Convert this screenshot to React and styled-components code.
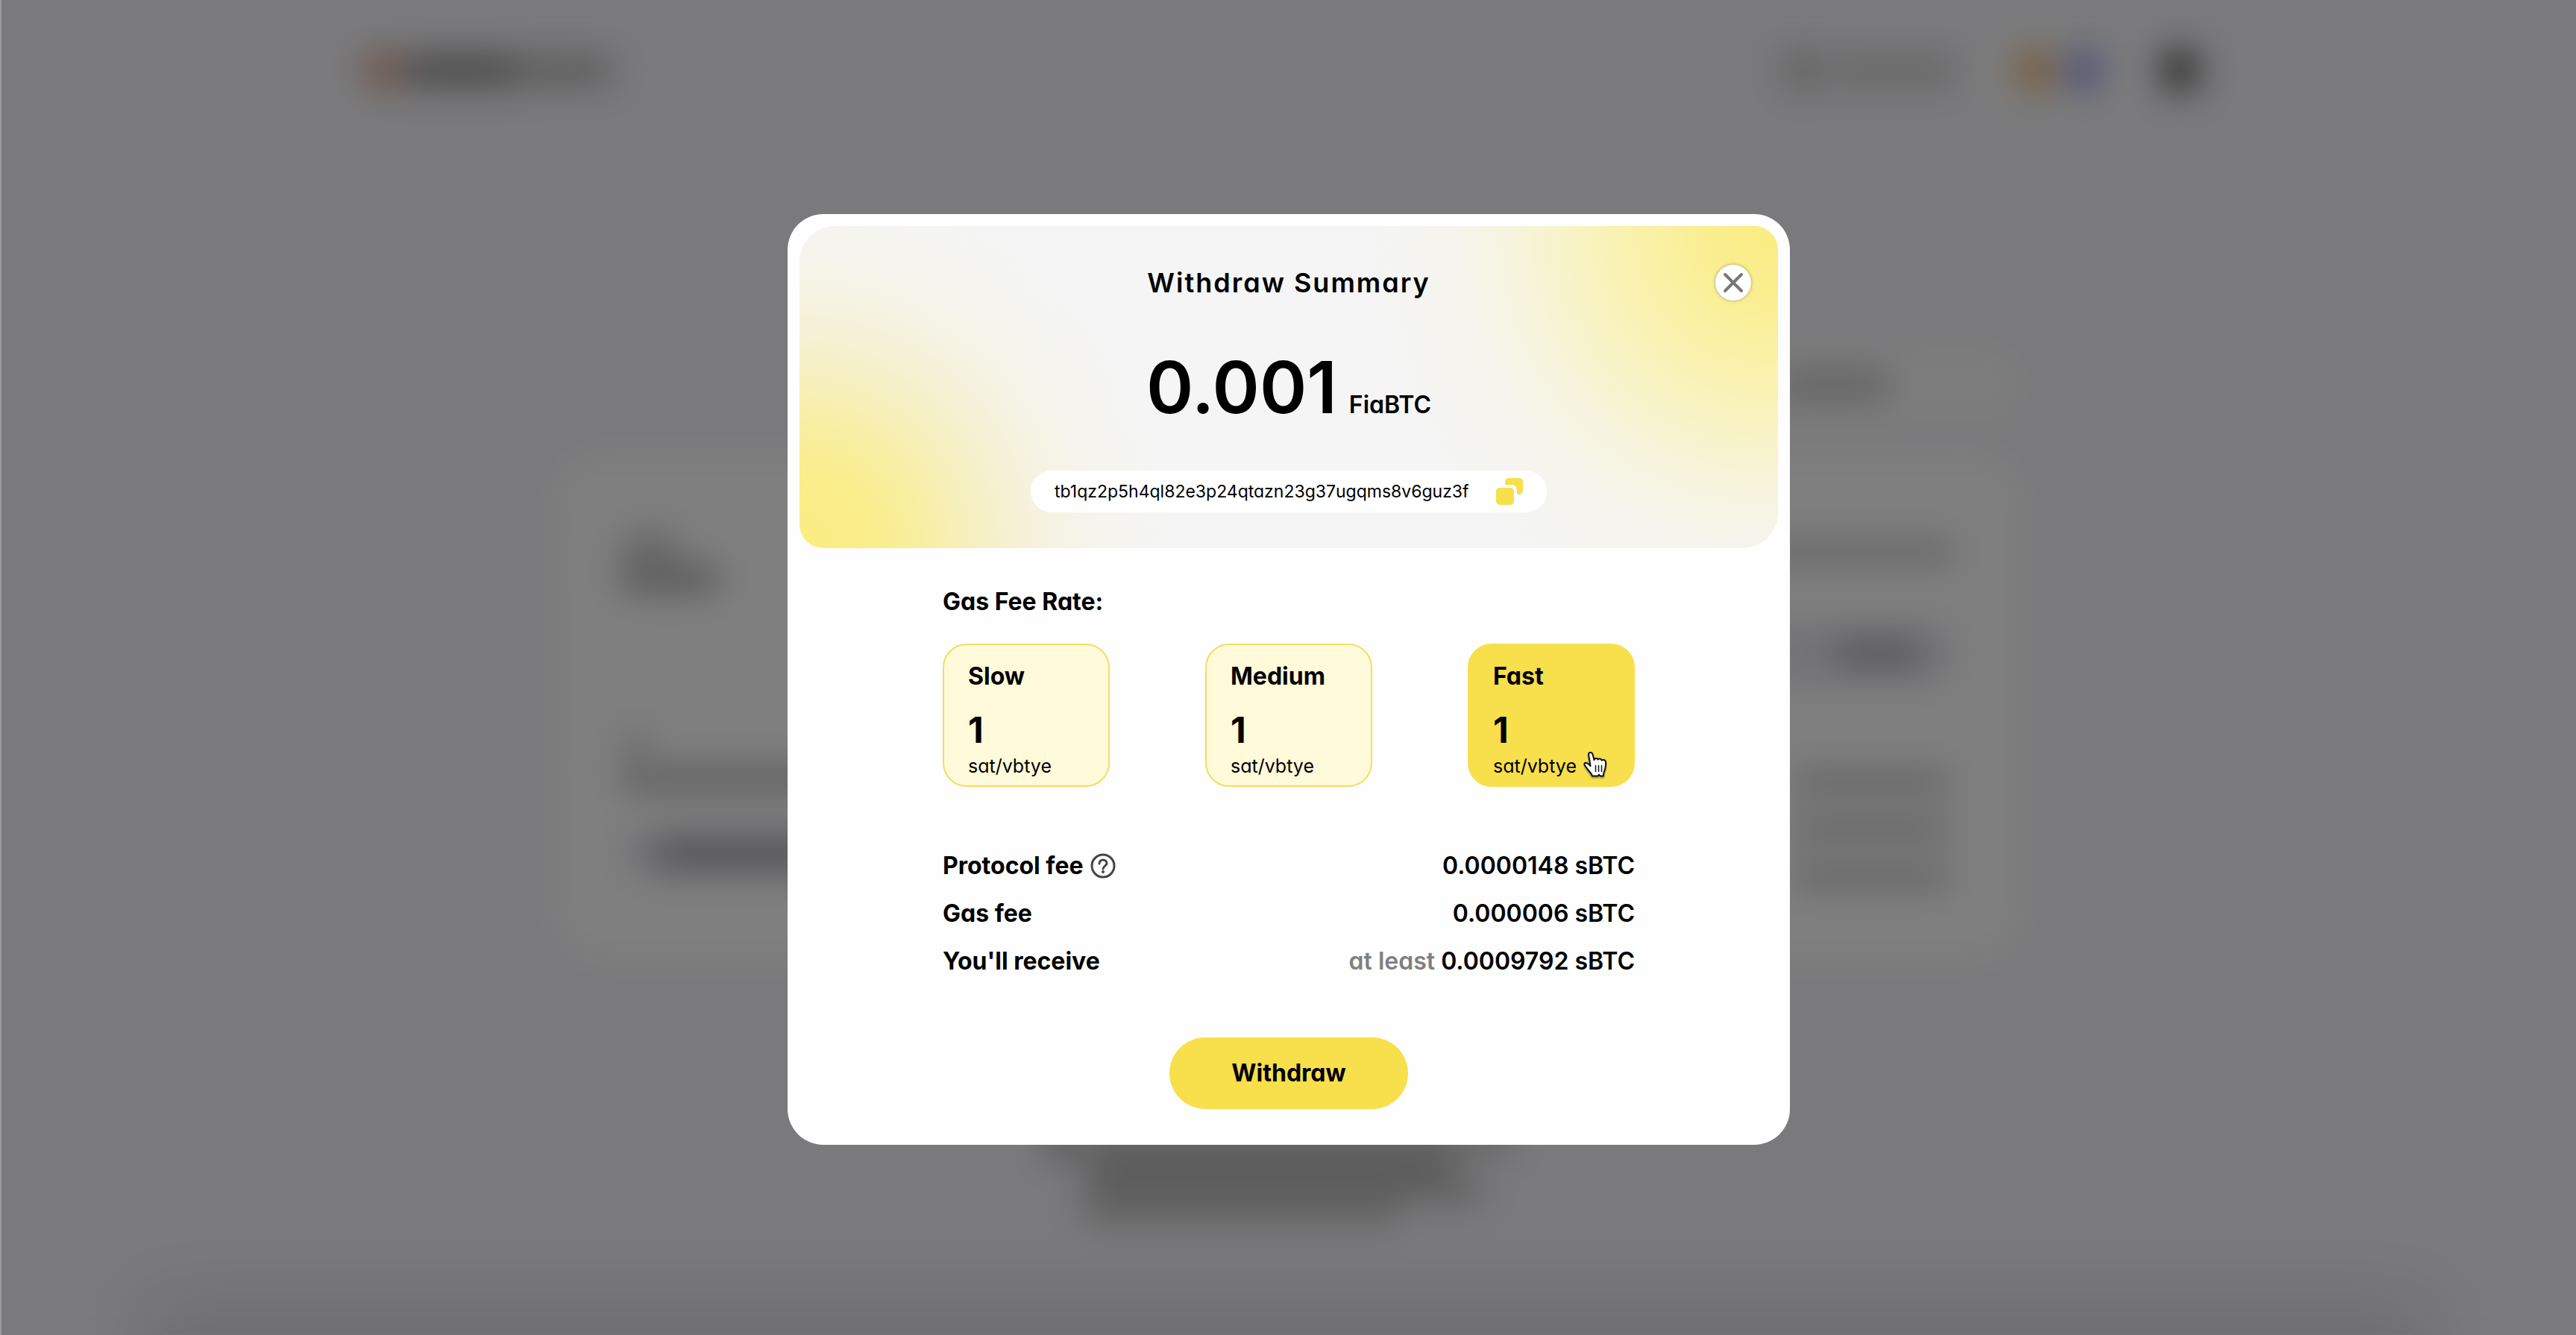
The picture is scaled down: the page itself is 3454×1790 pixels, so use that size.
import React, { useState } from "react";
import styled, { createGlobalStyle } from "styled-components";

const yellow = "#f8df4c";

const GlobalStyle = createGlobalStyle`
  *, *::before, *::after { box-sizing: border-box; }
  html, body { margin: 0; background: #f4f4f8; }
  body, button {
    font-family: Inter, "Open Sans", sans-serif;
    font-feature-settings: "cv11" 1;
    color: #000;
  }
  h1, p, dl, dt, dd, fieldset, legend { margin: 0; padding: 0; border: 0; }
  button { border: 0; padding: 0; cursor: pointer; }
`;

const Page = styled.div`
  min-height: 100vh;
  overflow: hidden;
  display: flex;
  flex-direction: column;
`;

const Bar = styled.span`
  display: block;
  width: ${(p) => p.$w}px;
  height: ${(p) => p.$h || 24}px;
  border-radius: ${(p) => p.$r || 0}px;
  background: ${(p) => p.$c || "#b8b8b8"};
`;

const TopBar = styled.header`
  width: 100%;
  max-width: 2480px;
  height: 188px;
  margin: 0 auto;
  padding: 0 20px 0 0;
  display: flex;
  align-items: center;
  justify-content: space-between;
`;

const Group = styled.div`
  display: flex;
  align-items: center;
  gap: ${(p) => p.$gap || 0}px;
`;

const TokenPill = styled.div`
  display: flex;
  gap: 16px;
  padding: 16px 40px;
  margin: 0 24px 0 28px;
  border-radius: 40px;
  background: #fbfbfb;
`;

const Tabs = styled.div`
  width: 100%;
  max-width: 1964px;
  height: 96px;
  margin: 280px auto 46px;
  display: flex;
  align-items: center;
  justify-content: flex-end;
  padding-right: 176px;
  border-radius: 48px;
  background: linear-gradient(90deg, #f4f4f8 50%, #fbfbfb 50%);
`;

const Panel = styled.section`
  width: 100%;
  max-width: 1964px;
  height: 676px;
  margin: 0 auto;
  padding: 108px 88px 0;
  border-radius: 64px;
  background: #fff;
  display: flex;
  justify-content: space-between;
`;

const Column = styled.div`
  flex: 1;
  display: flex;
  flex-direction: column;
  align-items: ${(p) => p.$align || "flex-start"};
  gap: ${(p) => p.$gap}px;
`;

const Stack = styled.div`
  display: flex;
  flex-direction: column;
  gap: ${(p) => p.$gap}px;
  margin: ${(p) => p.$margin || 0};
`;

const Field = styled.div`
  width: 640px;
  height: ${(p) => p.$h}px;
  margin-top: ${(p) => p.$mt || 0}px;
  padding: 0 48px;
  border-radius: 40px;
  background: #e7e7ee;
  display: flex;
  align-items: center;
  justify-content: ${(p) => p.$align || "flex-start"};
`;

const Note = styled.div`
  width: 630px;
  margin: 232px auto 0;
  display: flex;
  gap: 20px;
`;

const Footer = styled.footer`
  flex: none;
  height: 1px;
  width: calc(100% - 440px);
  margin: auto auto 0;
  box-shadow: 0 0 90px 20px rgba(0, 0, 0, 0.24);
`;

const Overlay = styled.div`
  position: fixed;
  inset: 0;
  padding-top: 32px;
  border-left: 2px solid rgba(255, 255, 255, 0.25);
  display: grid;
  place-items: center;
  background: rgba(0, 0, 0, 0.5);
  backdrop-filter: blur(24px);
`;

const Dialog = styled.main`
  width: 1344px;
  max-width: 100%;
  padding: 16px 16px 48px;
  border-radius: 48px;
  background: #fefefe;
  display: flex;
  flex-direction: column;
  align-items: center;
`;

const Hero = styled.header`
  position: relative;
  width: 100%;
  height: 432px;
  padding-top: 52px;
  border-radius: 48px 32px 48px 32px;
  background:
    radial-gradient(circle at 100% 0%, #fbec80 0, #faee92 100px, #faf1a8 180px, #f9f3c0 260px, #f6f4dc 350px, #f5f4ec 430px, #f5f5f500 550px),
    radial-gradient(circle at 0% 100%, #fbed80 0, #faed8c 100px, #f8eea2 165px, #f6f0c2 235px, #f5f2dc 310px, #f5f4ec 390px, #f5f5f500 490px),
    #f5f5f5;
  display: flex;
  flex-direction: column;
  align-items: center;
`;

const Title = styled.h1`
  font-size: 36px;
  line-height: 48px;
  font-weight: 600;
  letter-spacing: 2px;
`;

const CloseButton = styled.button`
  position: absolute;
  top: 52px;
  right: 36px;
  width: 48px;
  height: 48px;
  border-radius: 50%;
  background: #fff;
  box-shadow: 0 0 4px rgba(0, 0, 0, 0.35);
  display: grid;
  place-items: center;
`;

const Amount = styled.p`
  margin-top: 56px;
  display: flex;
  align-items: baseline;
  gap: 16px;
  font-size: 96px;
  line-height: 120px;
  font-weight: 600;
`;

const Unit = styled.span`
  font-size: 32px;
  line-height: 40px;
`;

const Address = styled.div`
  width: 692px;
  height: 56px;
  margin-top: 52px;
  padding: 0 32px;
  border-radius: 28px;
  background: #fff;
  display: flex;
  align-items: center;
  justify-content: space-between;
  font-size: 23px;
  line-height: 32px;
`;

const CopyButton = styled.button`
  width: 36px;
  height: 36px;
  background: none;

  svg { display: block; }
`;

const Body = styled.div`
  width: 100%;
  max-width: 928px;
  padding-top: 52px;
  display: flex;
  flex-direction: column;
  font-size: 32px;
  line-height: 40px;
  font-weight: 700;
`;

const Rates = styled.fieldset`
  display: flex;
  justify-content: space-between;
`;

const Legend = styled.legend`
  margin-bottom: 36px;
`;

const Rate = styled.button`
  position: relative;
  width: 224px;
  height: 192px;
  padding: 22px 32px 0;
  border: 2px solid ${(p) => (p.$active ? yellow : "#f2de60")};
  border-radius: 32px;
  background: ${(p) => (p.$active ? yellow : "#fffad9")};
  display: flex;
  flex-direction: column;
  text-align: left;
  font-size: 32px;
  line-height: 40px;
  font-weight: 700;
`;

const RateValue = styled.span`
  margin-top: 24px;
  font-size: 48px;
  line-height: 56px;
`;

const RateUnit = styled.span`
  font-size: 25px;
  line-height: 40px;
  font-weight: 400;
`;

const Pointer = styled.svg`
  position: absolute;
  left: 152px;
  top: 142px;
  filter: drop-shadow(0 2px 1px rgba(0, 0, 0, 0.35));
`;

const Summary = styled.dl`
  margin-top: 86px;
  display: flex;
  flex-direction: column;
  gap: 24px;
`;

const Row = styled.div`
  display: flex;
  justify-content: space-between;
`;

const Term = styled.dt`
  display: flex;
  align-items: center;
  gap: 8px;
`;

const Value = styled.dd`
  font-weight: 600;
`;

const Muted = styled.span`
  color: #808080;
`;

const Submit = styled.button`
  width: 320px;
  height: 96px;
  margin-top: 82px;
  border-radius: 48px;
  background: ${yellow};
  font-size: 32px;
  line-height: 40px;
  font-weight: 700;
`;

const rates = ["Slow", "Medium", "Fast"];

function HelpIcon() {
  return (
    <svg width="36" height="36" viewBox="0 0 36 36" fill="none" stroke="#444" strokeWidth="3" aria-hidden="true">
      <circle cx="18" cy="18" r="15" />
      <path d="M13 15c0-3 2-5 5-5s5 2 5 4.600c0 3.400-5 3.700-5 7.400" strokeLinecap="round" />
      <circle cx="18" cy="26" r="1" fill="#444" strokeWidth="2" />
    </svg>
  );
}

function HandPointer() {
  return (
    <Pointer width="36" height="38" viewBox="0 0 36 38" aria-hidden="true">
      <path
        d="M8 4.500C8 1.500 12.500 1 13.500 4.200L15.500 12C16 9 20 9 20.500 11.500C21.500 9.500 25 9.800 25.600 12.500C27 11 30.500 11.500 31 14.500C31.500 18 30.800 21 30 24.500C29.500 27 28 29 28 31V33.500H23.500L22 31.500L20.500 33.500H13C12 30 8 26.500 6 23.500C4.500 21 1.500 18.500 2.500 16.800C4 14.500 8 17 10.500 20Z"
        fill="#fff"
        stroke="#111"
        strokeWidth="2"
        strokeLinejoin="round"
      />
      <path d="M17.500 19.500v8M21.500 19.500v8M25.500 19.500v8" stroke="#111" strokeWidth="1.500" strokeLinecap="round" />
    </Pointer>
  );
}

function BlurredPage() {
  return (
    <Page aria-hidden="true">
      <TopBar>
        <Group $gap={4}>
          <Bar $w={52} $h={60} $r={26} $c="#dfae98" />
          <Bar $w={150} $h={40} $c="#8c8c8c" />
          <Bar $w={120} $h={32} $c="#a8a8a8" />
        </Group>
        <Group $gap={16}>
          <Bar $w={50} $h={50} $r={25} $c="#b8b8b8" />
          <Bar $w={160} $h={32} $c="#c4c4c4" />
          <TokenPill>
            <Bar $w={50} $h={54} $r={25} $c="#ecae64" />
            <Bar $w={50} $h={54} $r={25} $c="#8c94e4" />
          </TokenPill>
          <Bar $w={48} $h={56} $r={24} $c="#484848" />
        </Group>
      </TopBar>
      <Tabs>
        <Bar $w={150} $h={32} />
      </Tabs>
      <Panel>
        <Column $gap={194}>
          <Stack $gap={16}>
            <Bar $w={76} $h={26} />
            <Bar $w={130} $h={32} $c="#a4a4a4" />
          </Stack>
          <Stack $gap={24}>
            <Bar $w={36} $h={20} />
            <Bar $w={420} $h={28} $c="#b0b0b0" />
            <Field $h={68} $mt={28}>
              <Bar $w={420} $h={36} $c="#a0a0a6" />
            </Field>
          </Stack>
        </Column>
        <Column $gap={80} $align="flex-end">
          <Stack $margin="8px 0 0">
            <Bar $w={400} $h={28} $c="#c4c4c4" />
          </Stack>
          <Field $h={84} $align="flex-end">
            <Bar $w={110} $h={32} $c="#a8a8ae" />
          </Field>
          <Stack $gap={40} $margin="38px 8px 0 0">
            <Bar $w={210} $h={24} />
            <Bar $w={210} $h={24} />
            <Bar $w={210} $h={24} />
          </Stack>
        </Column>
      </Panel>
      <Note>
        <Bar $w={24} $h={30} $c="#555" />
        <Stack $gap={8}>
          <Bar $w={570} $c="#b4b4b4" />
          <Bar $w={490} $c="#a4a4a4" />
          <Bar $w={530} $c="#a8a8a8" />
          <Bar $w={420} $c="#b8b8b8" />
        </Stack>
      </Note>
      <Footer />
    </Page>
  );
}

export default function App() {
  const [selected, setSelected] = useState("Fast");

  return (
    <>
      <GlobalStyle />
      <BlurredPage />
      <Overlay>
        <Dialog role="dialog" aria-labelledby="summary-title">
          <Hero>
            <Title id="summary-title">Withdraw Summary</Title>
            <CloseButton type="button" aria-label="Close">
              <svg width="28" height="28" viewBox="0 0 28 28" stroke="#777" strokeWidth="4" strokeLinecap="round">
                <path d="M3 3L25 25M25 3L3 25" />
              </svg>
            </CloseButton>
            <Amount>
              0.001<Unit>FiaBTC</Unit>
            </Amount>
            <Address>
              tb1qz2p5h4ql82e3p24qtazn23g37ugqms8v6guz3f
              <CopyButton type="button" aria-label="Copy address">
                <svg width="36" height="36" viewBox="0 0 36 36" fill={yellow}>
                  <rect x="0" y="13" width="24" height="23" rx="5" />
                  <path d="M12 9V5a5 5 0 0 1 5-5h14a5 5 0 0 1 5 5v12a5 5 0 0 1-5 5h-3v-6a7 7 0 0 0-7-7z" />
                </svg>
              </CopyButton>
            </Address>
          </Hero>
          <Body>
            <Rates>
              <Legend>Gas Fee Rate:</Legend>
              {rates.map((name) => (
                <Rate
                  key={name}
                  type="button"
                  $active={name === selected}
                  aria-pressed={name === selected}
                  onClick={() => setSelected(name)}
                >
                  {name}
                  <RateValue>1</RateValue>
                  <RateUnit>sat/vbtye</RateUnit>
                  {name === "Fast" && <HandPointer />}
                </Rate>
              ))}
            </Rates>
            <Summary>
              <Row>
                <Term>
                  Protocol fee <HelpIcon />
                </Term>
                <Value>0.0000148 sBTC</Value>
              </Row>
              <Row>
                <Term>Gas fee</Term>
                <Value>0.000006 sBTC</Value>
              </Row>
              <Row>
                <Term>You'll receive</Term>
                <Value>
                  <Muted>at least</Muted> 0.0009792 sBTC
                </Value>
              </Row>
            </Summary>
          </Body>
          <Submit type="button">Withdraw</Submit>
        </Dialog>
      </Overlay>
    </>
  );
}
